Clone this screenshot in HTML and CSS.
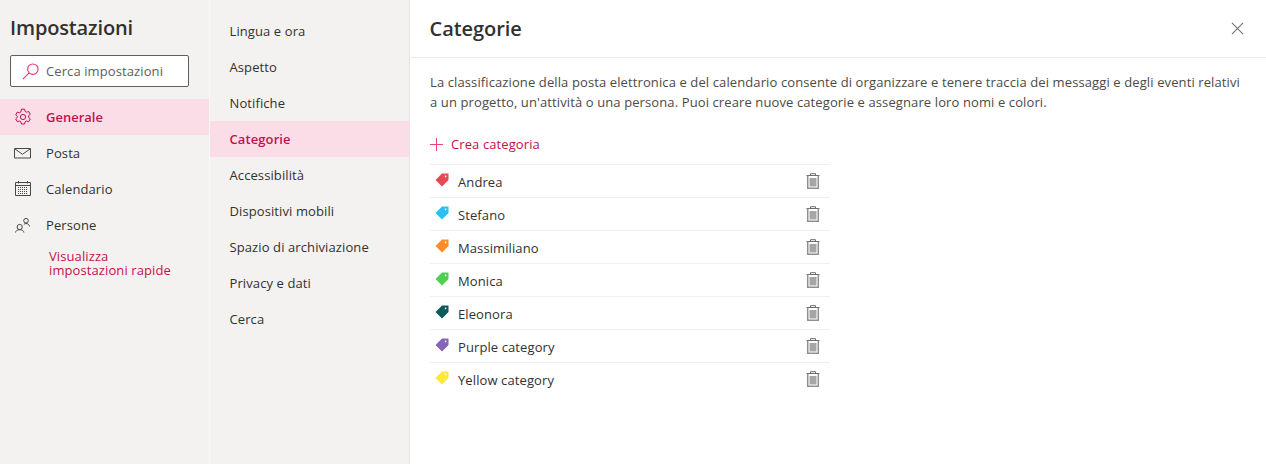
FILE: index.html
```html
<!DOCTYPE html>
<html lang="it">
<head>
<meta charset="utf-8">
<title>Impostazioni</title>
<link rel="stylesheet" href="styles.css">
</head>
<body>
<div class="app">
  <aside class="side">
    <h1 class="side-title">Impostazioni</h1>
    <div class="search">
      <svg class="search-ico" viewBox="0 0 18 18"><circle cx="11.500" cy="6.500" r="5.500"/><path d="M7.500 10.500 1 17"/></svg>
      <span>Cerca impostazioni</span>
    </div>
    <nav class="side-nav">
      <a class="side-item active">
        <svg class="ico" viewBox="0 0 18 18"><path d="M7.400 1.200h3.200l.5 2.200 1.400.8 2.200-.7 1.600 2.800-1.700 1.500v1.600l1.700 1.500-1.600 2.800-2.200-.7-1.400.8-.5 2.200H7.400l-.5-2.200-1.400-.8-2.200.7-1.600-2.800 1.700-1.500V8.400L1.700 6.900l1.600-2.800 2.200.7 1.400-.8z"/><circle cx="9" cy="9" r="2.600"/></svg>
        <span>Generale</span>
      </a>
      <a class="side-item">
        <svg class="ico" viewBox="0 0 18 18"><path d="M.5 4.500h16v9.500H.5z"/><path d="m.8 4.800 7.700 5.500 7.700-5.500"/></svg>
        <span>Posta</span>
      </a>
      <a class="side-item">
        <svg class="ico" viewBox="0 0 18 18"><path d="M1.500 2.500h15v13h-15zM1.500 5.500h15M4.500 1v2.500M13.500 1v2.500"/><path class="dots" d="M4 7.500h10M4 9.500h10M4 11.500h10M4 13.500h10"/></svg>
        <span>Calendario</span>
      </a>
      <a class="side-item">
        <svg class="ico" viewBox="0 0 18 18"><circle cx="5.700" cy="11" r="2.600"/><path d="M1.500 16.500c.3-1.800 1.800-2.800 4.200-2.800s3.900 1 4.200 2.800"/><circle cx="12" cy="4.700" r="2.300"/><path d="M9.800 8.600c.6-.8 1.300-1.100 2.200-1.100 2 0 3.200 1.200 3.500 3"/></svg>
        <span>Persone</span>
      </a>
    </nav>
    <a class="quick">Visualizza impostazioni rapide</a>
  </aside>
  <nav class="sub">
    <a class="sub-item">Lingua e ora</a>
    <a class="sub-item">Aspetto</a>
    <a class="sub-item">Notifiche</a>
    <a class="sub-item active">Categorie</a>
    <a class="sub-item">Accessibilità</a>
    <a class="sub-item">Dispositivi mobili</a>
    <a class="sub-item">Spazio di archiviazione</a>
    <a class="sub-item">Privacy e dati</a>
    <a class="sub-item">Cerca</a>
  </nav>
  <main class="main">
    <header class="head">
      <h2 class="head-title">Categorie</h2>
      <svg class="close" viewBox="0 0 14 14"><path d="m1 1 12 12M13 1 1 13"/></svg>
    </header>
    <section class="body">
      <p class="desc">La classificazione della posta elettronica e del calendario consente di organizzare e tenere traccia dei messaggi e degli eventi relativi a un progetto, un'attività o una persona. Puoi creare nuove categorie e assegnare loro nomi e colori.</p>
      <a class="create">
        <svg class="plus" viewBox="0 0 14 14"><path d="M7 0v14M0 7h14"/></svg>
        <span>Crea categoria</span>
      </a>
      <ul class="cats">
        <li class="cat"><svg class="tag tag-red" viewBox="0 0 14 14"><path d="M7 .5h6.500V7L7 13.500.5 7zM10.600 2.600a.8.8 0 1 0 .01 0z"/></svg><span class="cat-name">Andrea</span><svg class="trash" viewBox="0 0 14 16"><path class="fill" d="M3.500 5h7v8.500h-7z"/><path d="M.5 2.500h13M4.500 2.500V.7h5v1.800"/><path class="walls" d="M1.700 2.500v12.800h10.600V2.500"/></svg></li>
        <li class="cat"><svg class="tag tag-blue" viewBox="0 0 14 14"><path d="M7 .5h6.500V7L7 13.500.5 7zM10.600 2.600a.8.8 0 1 0 .01 0z"/></svg><span class="cat-name">Stefano</span><svg class="trash" viewBox="0 0 14 16"><path class="fill" d="M3.500 5h7v8.500h-7z"/><path d="M.5 2.500h13M4.500 2.500V.7h5v1.800"/><path class="walls" d="M1.700 2.500v12.800h10.600V2.500"/></svg></li>
        <li class="cat"><svg class="tag tag-orange" viewBox="0 0 14 14"><path d="M7 .5h6.500V7L7 13.500.5 7zM10.600 2.600a.8.8 0 1 0 .01 0z"/></svg><span class="cat-name">Massimiliano</span><svg class="trash" viewBox="0 0 14 16"><path class="fill" d="M3.500 5h7v8.500h-7z"/><path d="M.5 2.500h13M4.500 2.500V.7h5v1.800"/><path class="walls" d="M1.700 2.500v12.800h10.600V2.500"/></svg></li>
        <li class="cat"><svg class="tag tag-green" viewBox="0 0 14 14"><path d="M7 .5h6.500V7L7 13.500.5 7zM10.600 2.600a.8.8 0 1 0 .01 0z"/></svg><span class="cat-name">Monica</span><svg class="trash" viewBox="0 0 14 16"><path class="fill" d="M3.500 5h7v8.500h-7z"/><path d="M.5 2.500h13M4.500 2.500V.7h5v1.800"/><path class="walls" d="M1.700 2.500v12.800h10.600V2.500"/></svg></li>
        <li class="cat"><svg class="tag tag-teal" viewBox="0 0 14 14"><path d="M7 .5h6.500V7L7 13.500.5 7zM10.600 2.600a.8.8 0 1 0 .01 0z"/></svg><span class="cat-name">Eleonora</span><svg class="trash" viewBox="0 0 14 16"><path class="fill" d="M3.500 5h7v8.500h-7z"/><path d="M.5 2.500h13M4.500 2.500V.7h5v1.800"/><path class="walls" d="M1.700 2.500v12.800h10.600V2.500"/></svg></li>
        <li class="cat"><svg class="tag tag-purple" viewBox="0 0 14 14"><path d="M7 .5h6.500V7L7 13.500.5 7zM10.600 2.600a.8.8 0 1 0 .01 0z"/></svg><span class="cat-name">Purple category</span><svg class="trash" viewBox="0 0 14 16"><path class="fill" d="M3.500 5h7v8.500h-7z"/><path d="M.5 2.500h13M4.500 2.500V.7h5v1.800"/><path class="walls" d="M1.700 2.500v12.800h10.600V2.500"/></svg></li>
        <li class="cat"><svg class="tag tag-yellow" viewBox="0 0 14 14"><path d="M7 .5h6.500V7L7 13.500.5 7zM10.600 2.600a.8.8 0 1 0 .01 0z"/></svg><span class="cat-name">Yellow category</span><svg class="trash" viewBox="0 0 14 16"><path class="fill" d="M3.500 5h7v8.500h-7z"/><path d="M.5 2.500h13M4.500 2.500V.7h5v1.800"/><path class="walls" d="M1.700 2.500v12.800h10.600V2.500"/></svg></li>
      </ul>
    </section>
  </main>
</div>
</body>
</html>
```
FILE: styles.css
```css
* { box-sizing: border-box; }
html, body { margin: 0; height: 100%; }
body { font-family: "Open Sans", "Noto Sans", sans-serif; font-size: 13px; color: #323130; background: #fff; overflow: hidden; }
a { display: block; }
h1, h2, p, ul { margin: 0; padding: 0; }
.app { display: flex; width: 1266px; height: 464px; }

.side { width: 210px; flex: none; background: #f3f2f1; border-right: 1px solid #f8f7f6; }
.side-title { font-size: 20px; font-weight: 600; line-height: 28px; letter-spacing: -.15px; padding: 14px 0 0 10px; color: #323130; }
.search { display: flex; align-items: center; width: 179px; height: 32px; margin: 13px 0 0 10px; padding-left: 11px; background: #fff; border: 1px solid #605e5c; border-radius: 2px; color: #605e5c; letter-spacing: .1px; }
.search-ico { width: 17px; height: 17px; margin-right: 7px; fill: none; stroke: #e8366f; stroke-width: 1.200; }
.side-nav { margin-top: 12px; }
.side-item { display: flex; align-items: center; height: 36px; padding-left: 14px; letter-spacing: .1px; }
.side-item.active { background: #fadde6; color: #c2124d; font-weight: 600; letter-spacing: 0; }
.ico { width: 18px; height: 18px; margin-right: 14px; fill: none; stroke: #4a4846; stroke-width: 1; }
.active .ico { stroke: #c2124d; }
.ico .dots { stroke-dasharray: 1 1; }
.quick { width: 130px; margin: 6px 0 0 49px; line-height: 14px; color: #c2124d; letter-spacing: .1px; }

.sub { width: 200px; flex: none; background: #f3f2f1; border-right: 1px solid #e6e5e3; padding-top: 13px; }
.sub-item { height: 36px; line-height: 36px; padding-left: 19.500px; letter-spacing: .1px; }
.sub-item.active { background: #fadde6; color: #c2124d; font-weight: 600; }

.main { flex: 1; min-width: 0; }
.head { display: flex; align-items: center; justify-content: space-between; height: 58px; padding: 0 22px 0 19.500px; border-bottom: 1px solid #ebebeb; }
.head-title { font-size: 20px; font-weight: 600; line-height: 28px; letter-spacing: -.05px; }
.close { width: 13px; height: 13px; fill: none; stroke: #6f6e6c; stroke-width: 1.100; }
.body { padding: 15px 20px 0; }
.desc { line-height: 19.500px; width: 818px; color: #4b4a48; letter-spacing: .11px; }
.create { display: flex; align-items: center; height: 20px; margin-top: 22px; color: #c2124d; letter-spacing: .1px; }
.plus { width: 13px; height: 13px; margin-right: 8px; fill: none; stroke: #e8366f; stroke-width: 1; }
.cats { list-style: none; width: 400px; margin-top: 10px; border-top: 1px solid #efefef; }
.cat { display: flex; align-items: center; height: 33px; padding-left: 5px; border-bottom: 1px solid #efefef; }
.cat:last-child { border-bottom-color: transparent; }
.tag { width: 14px; height: 14px; margin: -3px 9px 0 0; fill-rule: evenodd; }
.tag-red { fill: #e74856; }
.tag-blue { fill: #2bc0f5; }
.tag-orange { fill: #ff8c26; }
.tag-green { fill: #4fd04f; }
.tag-teal { fill: #0b5a5c; }
.tag-purple { fill: #8764b8; }
.tag-yellow { fill: #fce83a; }
.cat-name { flex: 1; padding-top: 2px; letter-spacing: .1px; }
.trash { width: 14px; height: 16px; margin-right: 10px; fill: none; stroke: #6f6e6c; stroke-width: 1; }
.trash .fill { fill: #a6a6a6; stroke: none; }
.trash .walls { stroke: #8f8f8f; stroke-width: 1.500; }
```
